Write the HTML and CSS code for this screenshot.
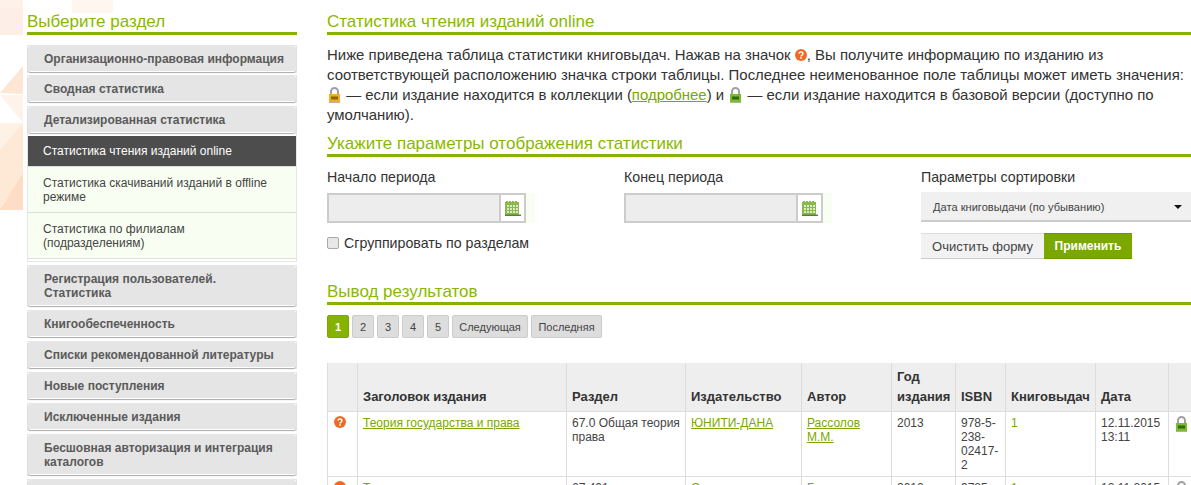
FILE: index.html
```
<!DOCTYPE html>
<html lang="ru">
<head>
<meta charset="utf-8">
<title>Статистика чтения изданий online</title>
<link rel="stylesheet" href="styles.css">
</head>
<body>
<svg class="decor" width="114" height="230" viewBox="0 0 114 230" aria-hidden="true">
  <rect x="72" y="0" width="41" height="13" fill="#fff6f0"/>
  <rect x="0" y="0" width="23" height="35" fill="#fdf1ea"/>
  <polygon points="0,8 23,8 23,35 0,35" fill="#fdeee8"/>
  <polygon points="0,93 23,66 23,94" fill="#fde6d3"/>
  <polygon points="0,95 23,95 23,123" fill="#fef3ea"/>
  <polygon points="0,123 23,123 23,210 0,210" fill="#fee8d6"/>
  <polygon points="0,123 23,123 0,150" fill="#fef1e6"/>
  <polygon points="0,210 23,173 23,210" fill="#fdddc5"/>
</svg>
<div class="page">
  <aside class="side">
    <h2 class="title">Выберите раздел</h2>
    <ul class="menu">
      <li class="menu-item"><a class="menu-link" href="#">Организационно-правовая информация</a></li>
      <li class="menu-item"><a class="menu-link" href="#">Сводная статистика</a></li>
      <li class="menu-item open"><a class="menu-link" href="#">Детализированная статистика</a>
        <ul class="sub">
          <li><a class="sub-link active" href="#">Статистика чтения изданий online</a></li>
          <li><a class="sub-link" href="#">Статистика скачиваний изданий в offline режиме</a></li>
          <li><a class="sub-link" href="#">Статистика по филиалам (подразделениям)</a></li>
        </ul>
      </li>
      <li class="menu-item"><a class="menu-link" href="#">Регистрация пользователей.<br>Статистика</a></li>
      <li class="menu-item"><a class="menu-link" href="#">Книгообеспеченность</a></li>
      <li class="menu-item"><a class="menu-link" href="#">Списки рекомендованной литературы</a></li>
      <li class="menu-item"><a class="menu-link" href="#">Новые поступления</a></li>
      <li class="menu-item"><a class="menu-link" href="#">Исключенные издания</a></li>
      <li class="menu-item"><a class="menu-link" href="#">Бесшовная авторизация и интеграция каталогов</a></li>
      <li class="menu-item"><a class="menu-link" href="#">&nbsp;</a></li>
    </ul>
  </aside>
  <main class="main">
    <h2 class="title">Статистика чтения изданий online</h2>
    <p class="intro">Ниже приведена таблица статистики книговыдач. Нажав на значок <svg class="ico-help" viewBox="0 0 12 12"><circle cx="6" cy="6" r="6" fill="#f26a21"/><path d="M4.1 4.6a1.9 1.7 0 1 1 2.9 1.5c-.7.4-1 .6-1 1.3" fill="none" stroke="#fff" stroke-width="1.5"/><rect x="5.2" y="8.2" width="1.6" height="1.6" fill="#fff"/></svg>, Вы получите информацию по изданию из соответствующей расположению значка строки таблицы. Последнее неименованное поле таблицы может иметь значения: <svg class="ico-lock" viewBox="0 0 13 16"><path d="M3 7V4.5a3.5 3.5 0 0 1 7 0V7" fill="none" stroke="#a0a0a0" stroke-width="2"/><rect x="1" y="7" width="11" height="9" fill="#b5b5a8"/><rect x="1" y="7" width="11" height="8" fill="#f0ae20"/><rect x="3" y="9.5" width="7" height="3" fill="#8a6412"/></svg> — если издание находится в коллекции (<a class="link" href="#">подробнее</a>) и <svg class="ico-lock" viewBox="0 0 13 16"><path d="M3 7V4.5a3.5 3.5 0 0 1 7 0V7" fill="none" stroke="#a0a0a0" stroke-width="2"/><rect x="1" y="7" width="11" height="9" fill="#a8b5a0"/><rect x="1" y="7" width="11" height="8" fill="#7dbb2c"/><rect x="3" y="9.5" width="7" height="3" fill="#2f6b10"/></svg> — если издание находится в базовой версии (доступно по умолчанию).</p>

    <h2 class="title title-sub">Укажите параметры отображения статистики</h2>
    <div class="filters">
      <div class="col">
        <label class="flabel">Начало периода</label>
        <div class="date"><input class="date-input" type="text"><span class="date-btn"><svg class="ico-cal" viewBox="0 0 16 16"><path d="M0 2h1V1h2v1h1V1h2v1h1V1h2v1h1V1h2v1h2v14H0z" fill="#8ab84e"/><rect x="0" y="14.6" width="16" height="1.4" fill="#58802a"/><g fill="#dcebc4"><rect x="2" y="5" width="2" height="2"/><rect x="5" y="5" width="2" height="2"/><rect x="8" y="5" width="2" height="2"/><rect x="11" y="5" width="2" height="2"/><rect x="2" y="8" width="2" height="2"/><rect x="5" y="8" width="2" height="2"/><rect x="8" y="8" width="2" height="2"/><rect x="11" y="8" width="2" height="2"/><rect x="2" y="11" width="2" height="2"/><rect x="5" y="11" width="2" height="2"/><rect x="8" y="11" width="2" height="2"/><rect x="11" y="11" width="2" height="2"/></g></svg></span></div>
        <label class="check"><input class="check-box" type="checkbox">Сгруппировать по разделам</label>
      </div>
      <div class="col">
        <label class="flabel">Конец периода</label>
        <div class="date"><input class="date-input" type="text"><span class="date-btn"><svg class="ico-cal" viewBox="0 0 16 16"><path d="M0 2h1V1h2v1h1V1h2v1h1V1h2v1h1V1h2v1h2v14H0z" fill="#8ab84e"/><rect x="0" y="14.6" width="16" height="1.4" fill="#58802a"/><g fill="#dcebc4"><rect x="2" y="5" width="2" height="2"/><rect x="5" y="5" width="2" height="2"/><rect x="8" y="5" width="2" height="2"/><rect x="11" y="5" width="2" height="2"/><rect x="2" y="8" width="2" height="2"/><rect x="5" y="8" width="2" height="2"/><rect x="8" y="8" width="2" height="2"/><rect x="11" y="8" width="2" height="2"/><rect x="2" y="11" width="2" height="2"/><rect x="5" y="11" width="2" height="2"/><rect x="8" y="11" width="2" height="2"/><rect x="11" y="11" width="2" height="2"/></g></svg></span></div>
      </div>
      <div class="col">
        <label class="flabel">Параметры сортировки</label>
        <div class="select"><span>Дата книговыдачи (по убыванию)</span><i class="caret"></i></div>
        <div class="btns"><button class="btn">Очистить форму</button><button class="btn btn-go">Применить</button></div>
      </div>
    </div>

    <h2 class="title title-res">Вывод результатов</h2>
    <div class="pager">
      <a class="pg cur">1</a><a class="pg">2</a><a class="pg">3</a><a class="pg">4</a><a class="pg">5</a><a class="pg wide">Следующая</a><a class="pg wide">Последняя</a>
    </div>

    <table class="grid">
      <colgroup><col class="c1"><col class="c2"><col class="c3"><col class="c4"><col class="c5"><col class="c6"><col class="c7"><col class="c8"><col class="c9"><col class="c10"></colgroup>
      <thead>
        <tr><th></th><th>Заголовок издания</th><th>Раздел</th><th>Издательство</th><th>Автор</th><th>Год издания</th><th>ISBN</th><th>Книговыдач</th><th>Дата</th><th></th></tr>
      </thead>
      <tbody>
        <tr>
          <td><svg class="ico-help" viewBox="0 0 12 12"><circle cx="6" cy="6" r="6" fill="#f26a21"/><path d="M4.1 4.6a1.9 1.7 0 1 1 2.9 1.5c-.7.4-1 .6-1 1.3" fill="none" stroke="#fff" stroke-width="1.5"/><rect x="5.2" y="8.2" width="1.6" height="1.6" fill="#fff"/></svg></td>
          <td><a class="link" href="#">Теория государства и права</a></td>
          <td>67.0 Общая теория права</td>
          <td><a class="link" href="#">ЮНИТИ-ДАНА</a></td>
          <td><a class="link" href="#">Рассолов М.М.</a></td>
          <td>2013</td>
          <td>978-5-238-02417-2</td>
          <td><span class="num">1</span></td>
          <td>12.11.2015 13:11</td>
          <td><svg class="ico-lock" viewBox="0 0 13 16"><path d="M3 7V4.5a3.5 3.5 0 0 1 7 0V7" fill="none" stroke="#a0a0a0" stroke-width="2"/><rect x="1" y="7" width="11" height="9" fill="#a8b5a0"/><rect x="1" y="7" width="11" height="8" fill="#7dbb2c"/><rect x="3" y="9.5" width="7" height="3" fill="#2f6b10"/></svg></td>
        </tr>
        <tr>
          <td><svg class="ico-help" viewBox="0 0 12 12"><circle cx="6" cy="6" r="6" fill="#f26a21"/></svg></td>
          <td><a class="link" href="#">Теория</a></td>
          <td>67.401</td>
          <td><a class="link" href="#">Статут</a></td>
          <td><a class="link" href="#">Бачило</a></td>
          <td>2012</td>
          <td>9785</td>
          <td><span class="num">1</span></td>
          <td>12.11.2015</td>
          <td><svg class="ico-lock" viewBox="0 0 13 16"><path d="M3 7V4.5a3.5 3.5 0 0 1 7 0V7" fill="none" stroke="#a0a0a0" stroke-width="2"/></svg></td>
        </tr>
      </tbody>
    </table>
  </main>
</div>
</body>
</html>
```
FILE: styles.css
```
* { box-sizing: border-box; }
html, body { margin: 0; height: 485px; overflow: hidden; background: #fff; }
body { font-family: "Liberation Sans", Arial, sans-serif; font-size: 14px; color: #333; }
ul { list-style: none; margin: 0; padding: 0; }

.decor { position: absolute; left: 0; top: 0; }

.page { position: relative; display: flex; gap: 30px; padding: 12px 0 0 27px; width: 1191px; }
.side { width: 270px; flex: none; }
.main { width: 864px; flex: none; }

.title { margin: 0; font-size: 17px; line-height: 20px; height: 23px; font-weight: 400; color: #8ab800; border-bottom: 3px solid #86b300; }

.menu { margin-top: 10px; }
.menu-item { border: 1px solid #e6e6e6; margin-bottom: 3px; background: #fff; }
.menu-item:first-child { margin-bottom: 2px; }
.menu-link { display: block; padding: 6px 8px 5px 16px; font-size: 12px; line-height: 14px; font-weight: 700; color: #5a5a5a; text-decoration: none; background: #e5e5e5; border-radius: 3px; border-bottom: 1px solid #fff; box-shadow: 0 1px 1px #aaa; }
.menu-item.open { padding-bottom: 2px; }
.sub { margin-top: 3px; }
.sub li { border-bottom: 1px solid #ddd; background: #f8fff2; }
.sub-link { display: block; padding: 9px 15px 8px; font-size: 12px; line-height: 14px; color: #444; text-decoration: none; }
.sub-link.active { padding-top: 8px; background: #4d4d4d; color: #fff; }

.intro { margin: 10px 0 0; line-height: 20px; font-size: 14.95px; width: 864px; }
.ico-help { display: inline-block; width: 12px; height: 12px; vertical-align: -1px; }
.ico-lock { display: inline-block; width: 13px; height: 16px; vertical-align: -3px; }
.intro .ico-lock { margin: 0 1px; }
.link { color: #7aa800; text-decoration: underline; }

.title-sub { margin-top: 9px; }
.filters { display: grid; grid-template-columns: repeat(3, 270px); gap: 27px; margin-top: 10px; height: 115px; }
.flabel { display: block; font-size: 14.2px; line-height: 20px; }
.date { display: flex; width: 208px; margin-top: 6px; height: 30px; background: #f8fff2; }
.date-input { width: 172px; height: 30px; background: #ededed; border: 2px solid #ccc; border-right: 0; outline: 0; padding: 0; }
.date-btn { width: 27px; height: 30px; display: flex; align-items: center; justify-content: center; border: 2px solid #ccc; background: #fff; }
.ico-cal { width: 16px; height: 16px; }
.check { display: flex; align-items: center; gap: 5px; margin-top: 11px; line-height: 18px; font-size: 14.2px; }
.check-box { appearance: none; margin: 0; width: 12px; height: 12px; background: #e8e8e8; border: 1px solid #aaa; border-radius: 2px; }
.select { display: flex; align-items: center; justify-content: space-between; margin-top: 5px; height: 30px; padding: 1px 7px 0 12px; background: #f0f0f0; border-bottom: 2px solid #ccc; font-size: 11.1px; color: #444; }
.caret { width: 0; height: 0; border: 4px solid transparent; border-top: 4px solid #111; border-bottom: 0; margin-right: 2px; }
.btns { display: flex; margin-top: 11px; }
.btn { height: 26px; width: 123px; padding: 0; font: 13px/1 "Liberation Sans", Arial, sans-serif; color: #444; background: #f2f2f2; border: 0; border-top: 1px solid #ddd; border-bottom: 1px solid #ccc; }
.btn-go { width: 88px; background: #7aa800; color: #fff; font-weight: 700; font-size: 12px; border-color: #6b9600; }

.title-res { margin-top: 0; }
.pager { display: flex; gap: 3px; margin-top: 10px; }
.pg { width: 22px; height: 23px; display: flex; align-items: center; justify-content: center; font-size: 11px; color: #444; background: #ddd; border: 1px solid #ccc; border-radius: 2px; }
.pg.cur { background: #86b300; color: #fff; font-weight: 700; border-color: #7aa800; }
.pg.wide { width: 76px; }
.pg.wide:last-child { width: 71px; }

.grid { table-layout: fixed; border-collapse: collapse; margin-top: 25px; width: 864px; font-size: 12px; line-height: 14px; }
.c1 { width: 30px; } .c2 { width: 209px; } .c3 { width: 119px; } .c4 { width: 116px; } .c5 { width: 90px; }
.c6 { width: 64px; } .c7 { width: 50px; } .c8 { width: 90px; } .c9 { width: 73px; } .c10 { width: 23px; }
.grid th { background: #eee; border: 1px solid #ddd; border-top: 0; padding: 4px 5px; text-align: left; vertical-align: bottom; font-size: 13px; line-height: 20px; font-weight: 700; color: #333; }
.grid td { border: 1px solid #ddd; padding: 4px 5px; vertical-align: top; color: #444; }
.grid tr > :first-child { padding: 4px 6px; }
.grid td:last-child { padding-left: 6px; }
.num { color: #7aa800; }
```
